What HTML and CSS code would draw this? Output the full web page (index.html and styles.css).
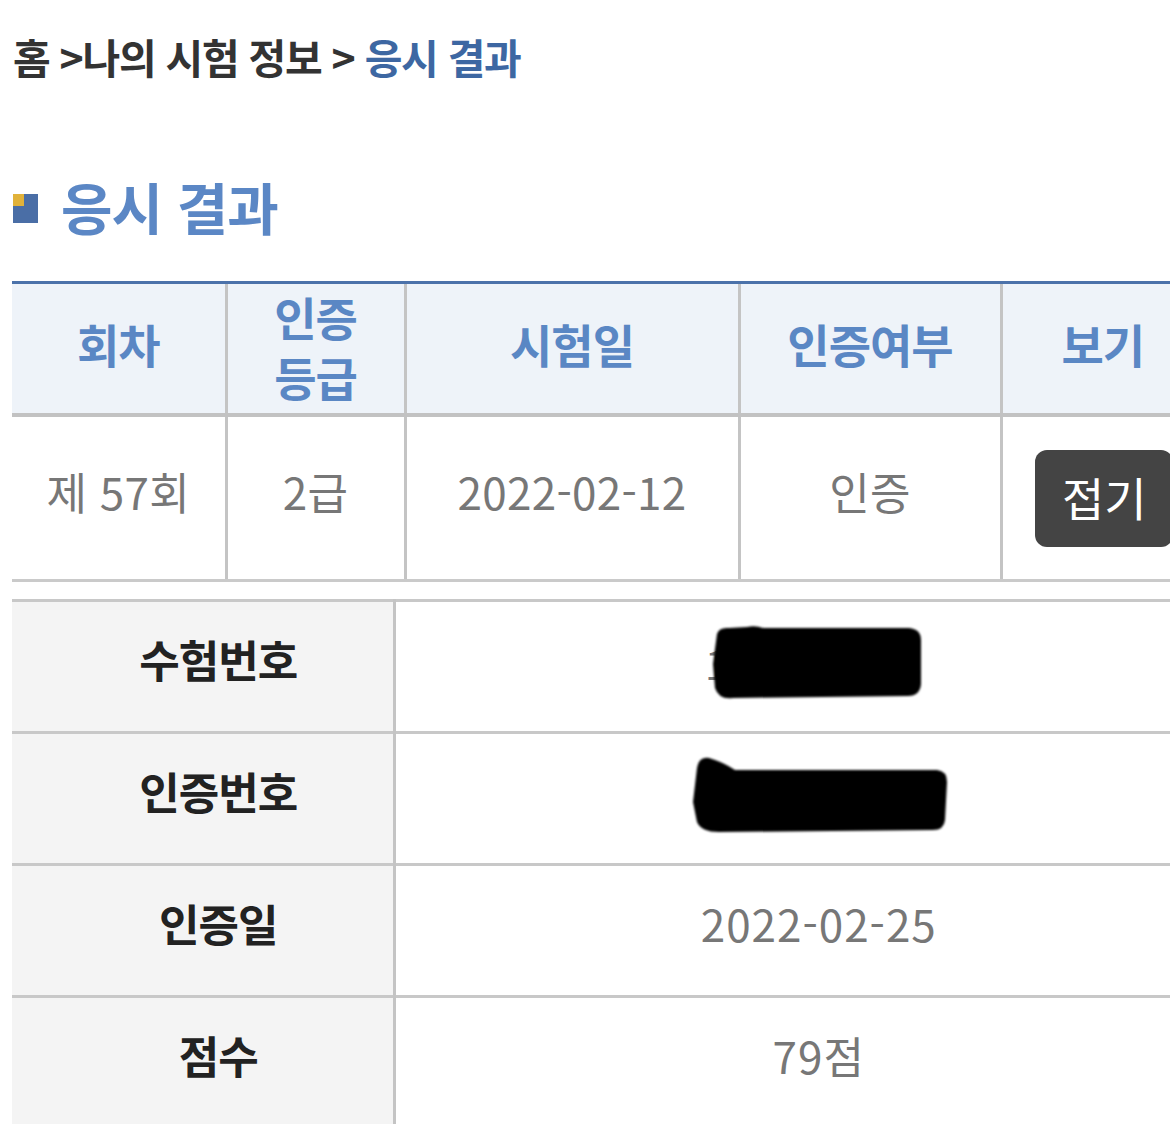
FILE: index.html
```html
<!DOCTYPE html>
<html lang="ko">
<head>
<meta charset="utf-8">
<link rel="stylesheet" href="styles.css">
</head>
<body>
<div class="page">
  <nav class="crumb">홈 &gt;나의 시험 정보 &gt; <span class="crumb-cur">응시 결과</span></nav>
  <h1 class="title"><span class="title-icon"></span>응시 결과</h1>
  <table class="list">
    <colgroup>
      <col style="width:214px"><col style="width:179px"><col style="width:334px"><col style="width:262px"><col style="width:202px">
    </colgroup>
    <thead>
      <tr>
        <th>회차</th>
        <th class="two-line">인증<br>등급</th>
        <th>시험일</th>
        <th>인증여부</th>
        <th>보기</th>
      </tr>
    </thead>
    <tbody>
      <tr>
        <td>제 57회</td>
        <td>2급</td>
        <td>2022-02-12</td>
        <td>인증</td>
        <td class="btn-cell"><button class="fold">접기</button></td>
      </tr>
    </tbody>
  </table>
  <table class="detail">
    <colgroup><col style="width:382px"><col></colgroup>
    <tr>
      <th>수험번호</th>
      <td class="val">
        <svg class="redact redact-1" width="230" height="80" viewBox="0 0 230 80">
          <defs><filter id="b1"><feGaussianBlur stdDeviation="1.2"/></filter></defs>
          <text x="2" y="56" font-size="40" fill="#777" font-family="Noto Sans CJK KR, sans-serif">1</text>
          <text x="196" y="56" font-size="40" fill="#777" font-family="Noto Sans CJK KR, sans-serif">3</text>
          <path d="M14 10 Q16 3 26 4 L44 3 Q52 1 60 4 L206 4 Q218 5 218 16 L218 60 Q217 72 205 72 L30 74 Q16 76 12 64 L10 40 Z" fill="#000" filter="url(#b1)"/>
        </svg>
      </td>
    </tr>
    <tr>
      <th>인증번호</th>
      <td class="val">
        <svg class="redact redact-2" width="260" height="84" viewBox="0 0 260 84">
          <defs><filter id="b2"><feGaussianBlur stdDeviation="1.3"/></filter></defs>
          <path d="M8 16 Q10 4 20 6 Q34 10 46 18 L248 18 Q258 19 258 30 L256 68 Q255 78 244 78 L30 80 Q12 80 8 70 L4 50 Z" fill="#000" filter="url(#b2)"/>
        </svg>
      </td>
    </tr>
    <tr>
      <th>인증일</th>
      <td class="val">2022-02-25</td>
    </tr>
    <tr>
      <th>점수</th>
      <td class="val">79점</td>
    </tr>
  </table>
</div>
</body>
</html>
```

FILE: styles.css
```css
html, body {
  margin: 0;
  padding: 0;
  overflow: hidden;
  background: #fff;
}
.page {
  width: 1260px;
  padding-left: 12px;
  font-family: "Noto Sans CJK KR", "Noto Sans", sans-serif;
}
.crumb {
  font-size: 41px;
  font-weight: 700;
  color: #333;
  letter-spacing: -1.3px;
  line-height: 56px;
  padding-top: 28px;
  margin-left: 1px;
}
.crumb-cur {
  color: #3d67a2;
}
.title {
  display: flex;
  align-items: center;
  margin: 0;
  margin-top: 89px;
  font-size: 56px;
  font-weight: 700;
  color: #5b87c5;
  letter-spacing: -1px;
  line-height: 66px;
}
.title-icon {
  width: 25px;
  height: 29px;
  margin-left: 1px;
  margin-right: 23px;
  margin-top: 4px;
  background: linear-gradient(#e1b23a, #e1b23a) top left / 11px 12px no-repeat, #4a6ea6;
}
.list {
  margin-top: 42px;
  border-collapse: collapse;
  table-layout: fixed;
  width: 1191px;
}
.list th, .list td {
  text-align: center;
  vertical-align: middle;
  padding: 0;
  border-left: 3px solid #c4c4c4;
}
.list th:first-child, .list td:first-child {
  border-left: none;
}
.list thead th {
  background: #eef3f9;
  color: #5a87c4;
  font-size: 46px;
  font-weight: 700;
  line-height: 60px;
  height: 117px;
  padding-bottom: 12px;
  border-top: 3px solid #4b72aa;
  border-bottom: 4px solid #c2c2c2;
  letter-spacing: -1px;
}
.list thead th.two-line {
  height: 123px;
  padding-bottom: 6px;
}
.list tbody td {
  height: 148px;
  padding-bottom: 14px;
  font-size: 44px;
  letter-spacing: 0.3px;
  color: #777;
  border-bottom: 3px solid #cacaca;
}
.list tbody td.btn-cell {
  padding-bottom: 0;
  height: 162px;
}
.fold {
  width: 138px;
  height: 97px;
  margin-left: 3px;
  margin-top: 0;
  border: none;
  border-radius: 12px;
  background: #444;
  color: #fff;
  font-family: inherit;
  font-size: 46px;
  padding: 0 0 4px;
}
.detail {
  margin-top: 17px;
  border-collapse: collapse;
  table-layout: fixed;
  width: 1230px;
}
.detail th, .detail td {
  height: 113px;
  border-top: 3px solid #c8c8c8;
  padding: 0 0 16px;
  vertical-align: middle;
}
.detail th {
  background: #f4f4f4;
  font-size: 44px;
  font-weight: 700;
  color: #222;
  text-align: center;
  padding-left: 32px;
  border-right: 3px solid #c4c4c4;
  letter-spacing: -1px;
}
.detail td {
  text-align: center;
  font-size: 44px;
  letter-spacing: 1px;
  color: #777;
}
.redact {
  display: block;
}
.redact-1 { margin-left: 307px; margin-top: 10px; }
.redact-2 { margin-left: 293px; margin-top: 6px; }
```
